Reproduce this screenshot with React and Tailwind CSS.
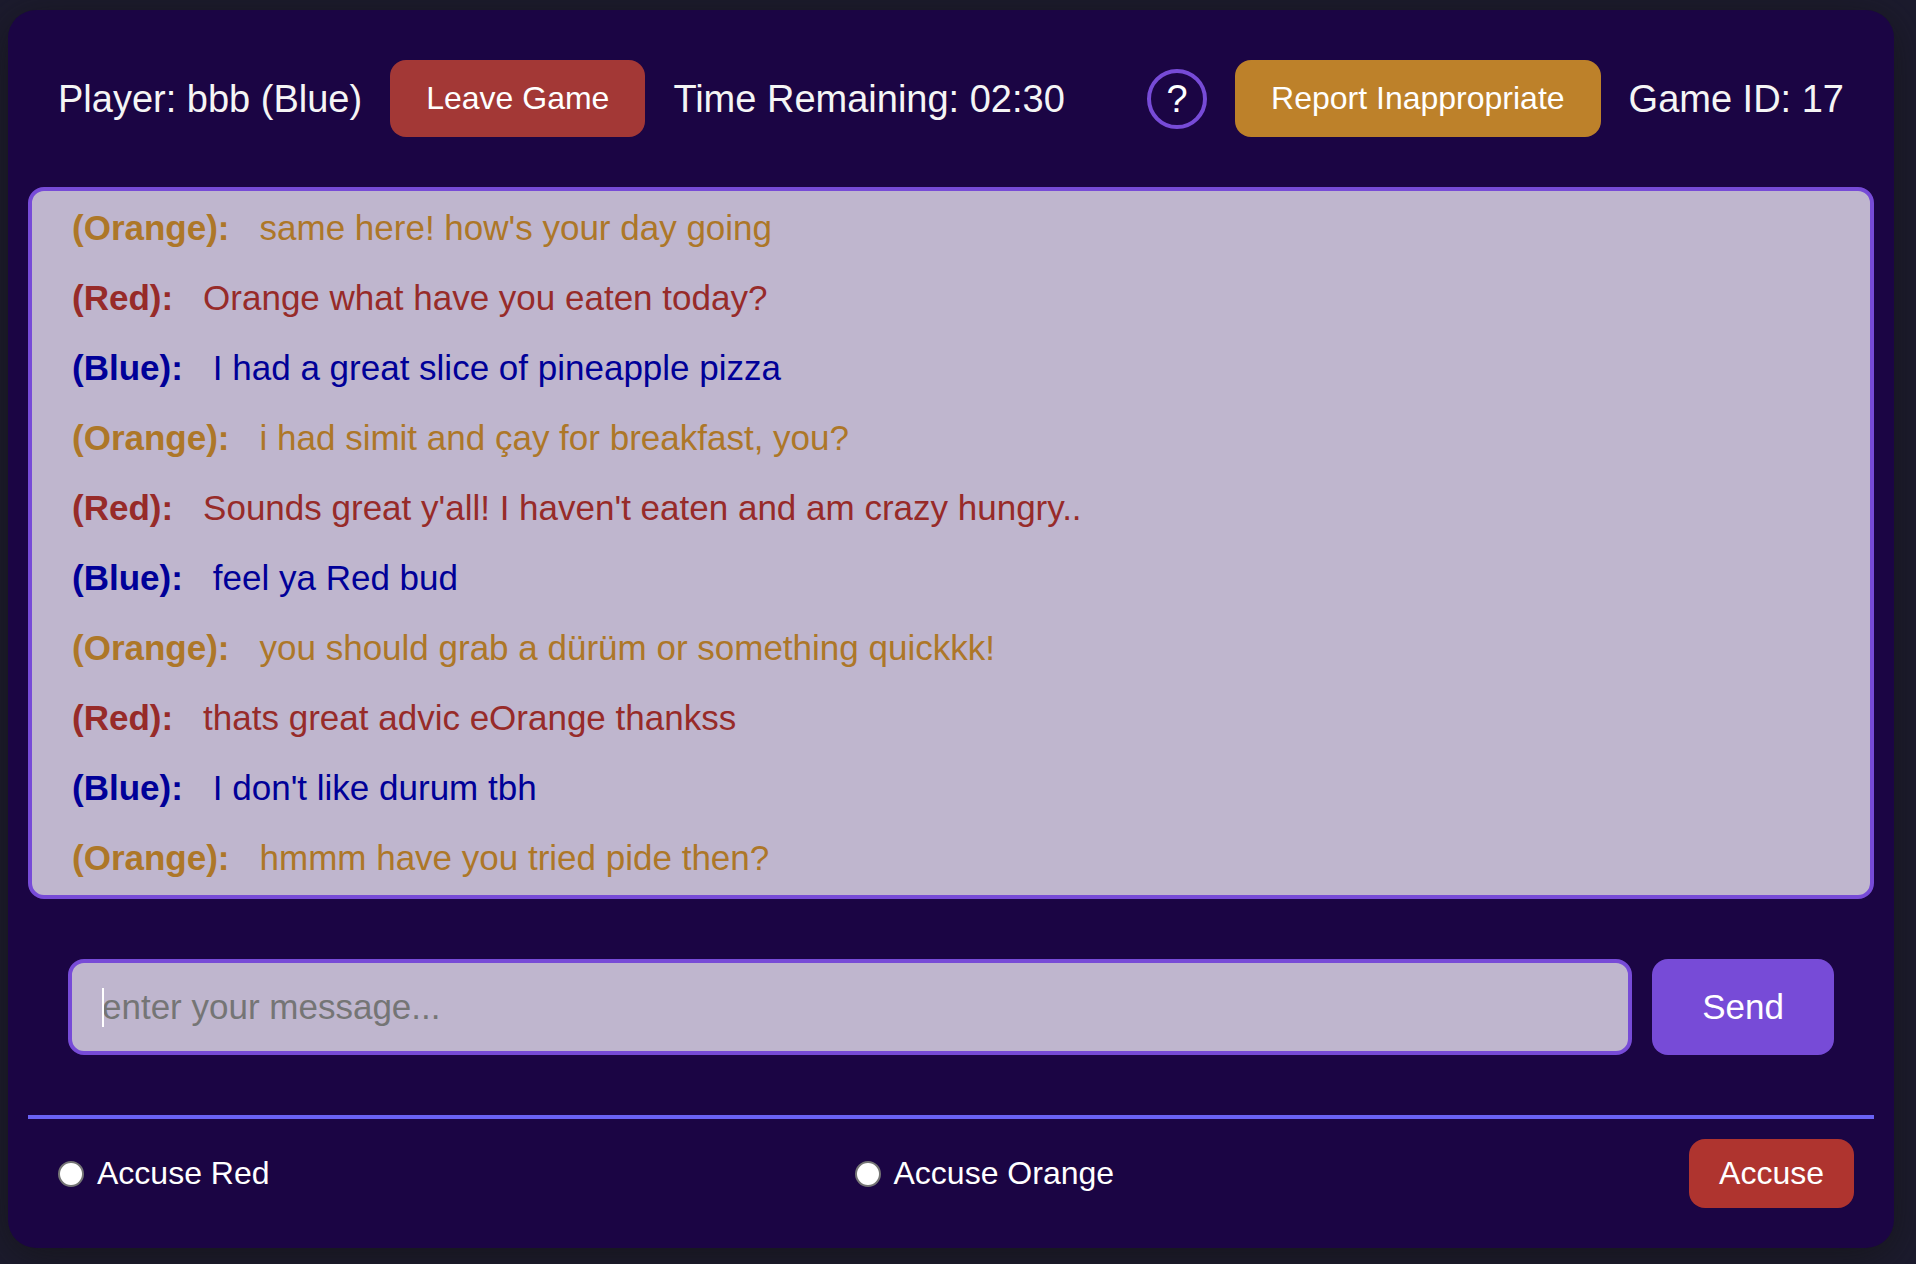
import React from "react";

const NAME_COLORS = {
  Orange: "text-[#ad7728]",
  Red: "text-[#972b29]",
  Blue: "text-[#000098]",
};

const MESSAGES = [
  { from: "Orange", text: "same here! how's your day going" },
  { from: "Red", text: "Orange what have you eaten today?" },
  { from: "Blue", text: "I had a great slice of pineapple pizza" },
  { from: "Orange", text: "i had simit and çay for breakfast, you?" },
  { from: "Red", text: "Sounds great y'all! I haven't eaten and am crazy hungry.." },
  { from: "Blue", text: "feel ya Red bud" },
  { from: "Orange", text: "you should grab a dürüm or something quickkk!" },
  { from: "Red", text: "thats great advic eOrange thankss" },
  { from: "Blue", text: "I don't like durum tbh" },
  { from: "Orange", text: "hmmm have you tried pide then?" },
];

function Header() {
  return (
    <header className="flex items-center justify-between p-[30px] text-[38px] leading-[44px] text-[#f5f5f5]">
      <div className="flex items-center gap-7">
        <span>Player: bbb (Blue)</span>
        <button type="button" className="rounded-2xl bg-[#a33836] px-9 py-5 text-[32px] leading-[37px] text-white">
          Leave Game
        </button>
        <span>Time Remaining: 02:30</span>
      </div>
      <div className="flex items-center gap-7">
        <button
          type="button"
          aria-label="Help"
          className="flex size-[60px] items-center justify-center rounded-full border-4 border-[#774bd7] text-white"
        >
          ?
        </button>
        <button type="button" className="rounded-2xl bg-[#bd812a] px-9 py-5 text-[32px] leading-[37px] text-white">
          Report Inappropriate
        </button>
        <span>Game ID: 17</span>
      </div>
    </header>
  );
}

function ChatLog() {
  return (
    <ul className="mt-5 rounded-2xl border-4 border-[#774bd7] bg-[#bfb6ce] px-10 py-[2px] text-[35px] leading-[70px]">
      {MESSAGES.map((message, index) => (
        <li key={index} className={`flex gap-[30px] ${NAME_COLORS[message.from]}`}>
          <strong className="font-bold">({message.from}):</strong>
          <span>{message.text}</span>
        </li>
      ))}
    </ul>
  );
}

function MessageForm() {
  return (
    <form className="flex gap-5 px-10 py-[60px] text-[35px] leading-10" onSubmit={(event) => event.preventDefault()}>
      <div className="relative flex-1">
        <input
          type="text"
          aria-label="Message"
          placeholder="enter your message..."
          className="block h-24 w-full rounded-2xl border-4 border-[#774bd7] bg-[#bfb6ce] px-[30px] text-white outline-none placeholder:text-[#757575]"
        />
        <span aria-hidden="true" className="absolute top-[29px] left-[34px] h-[39px] w-[2px] bg-white" />
      </div>
      <button type="submit" className="rounded-2xl bg-[#774bd7] px-[50px] text-white">
        Send
      </button>
    </form>
  );
}

function AccuseOption({ value }) {
  return (
    <label className="flex items-center gap-[13px] pl-[10px]">
      <input
        type="radio"
        name="accuse"
        value={value}
        className="size-[26px] appearance-none rounded-full border-2 border-[#757575] bg-white checked:border-8"
      />
      Accuse {value}
    </label>
  );
}

function AccuseBar() {
  return (
    <form
      className="flex items-center justify-between border-t-4 border-[#6a62f5] p-5 text-[32px] leading-[37px] text-white"
      onSubmit={(event) => event.preventDefault()}
    >
      <AccuseOption value="Red" />
      <AccuseOption value="Orange" />
      <button type="submit" className="rounded-2xl bg-[#af342f] px-[30px] py-4">
        Accuse
      </button>
    </form>
  );
}

export default function App() {
  return (
    <div className="min-h-screen bg-[#1c1b2e] pt-[10px] pr-[22px] pb-3 pl-2 font-['Liberation_Sans',Arial,sans-serif]">
      <main className="rounded-[28px] bg-[#1b0544] p-5 shadow-[0_8px_40px_rgba(20,20,20,0.7)]">
        <Header />
        <ChatLog />
        <MessageForm />
        <AccuseBar />
      </main>
    </div>
  );
}
